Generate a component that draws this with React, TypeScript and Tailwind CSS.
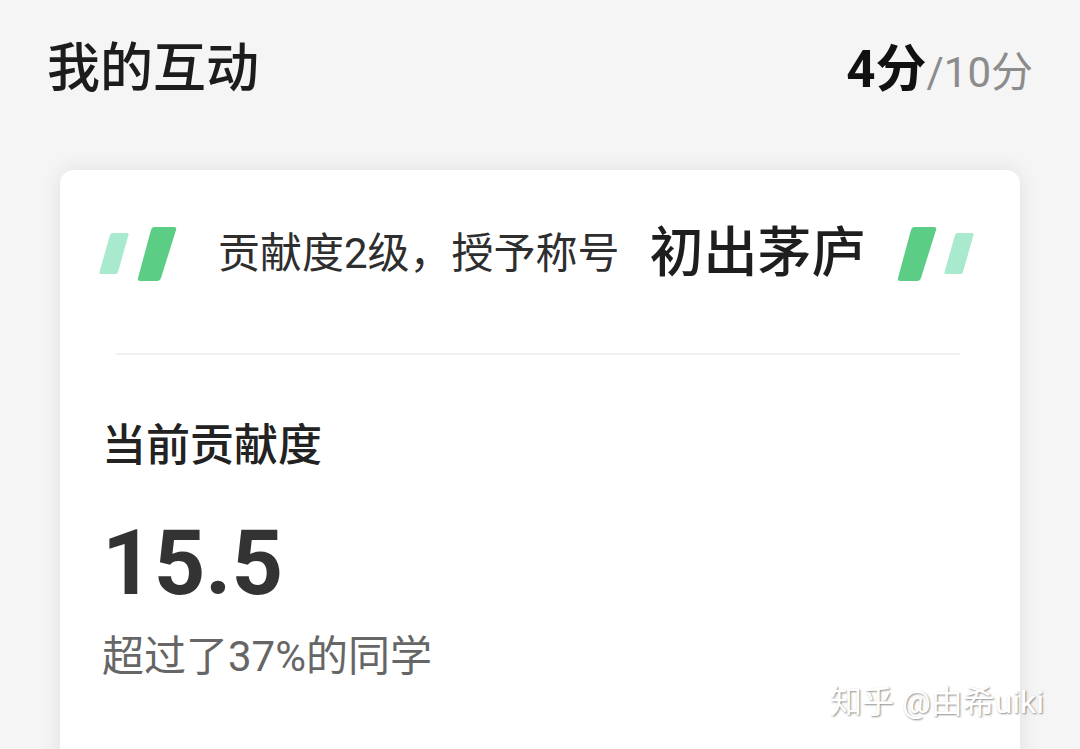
import React from "react";

const font = { fontFamily: "Roboto, 'Noto Sans CJK SC', sans-serif" };

function Light() {
  return (
    <svg width="31" height="56" viewBox="0 0 31 56">
      <path d="M15 7 L29 7 Q31 7 30.5 9 L20 46 Q19.5 48 17.5 48 L3 48 Q1 48 1.5 46 L12 9 Q12.5 7 15 7 Z" fill="#a9e9cd" />
    </svg>
  );
}

function Dark() {
  return (
    <svg width="41" height="56" viewBox="37 0 41 56">
      <path d="M55 1 L75 1 Q78 1 77 4 L62 52 Q61 55 58 55 L41 55 Q38 55 39 52 L52 4 Q53 1 55 1 Z" fill="#5bcd85" />
    </svg>
  );
}

export default function App() {
  return (
    <div className="relative h-[749px] w-[1080px] overflow-hidden bg-[#f5f5f5]" style={font}>
      <div className="flex items-center justify-between pl-[47px] pr-[47px] pt-[43px]">
        <div className="text-[53px] leading-none font-medium text-[#1c1c1c]">我的互动</div>
        <div className="flex items-baseline leading-none">
          <span className="text-[51px] font-bold text-[#111]">4分</span>
          <span className="text-[42px] text-[#8c8c8c]">/10分</span>
        </div>
      </div>

      <div className="mx-[60px] mt-[74px] h-[700px] rounded-[14px] bg-white shadow-[0_0_22px_rgba(0,0,0,0.09)]">
        <div className="flex h-[56px] translate-y-[56px] items-center pl-[38px]">
          <Light />
          <span className="ml-[7px]">
            <Dark />
          </span>
          <span className="ml-[41px] text-[42px] leading-none text-[#2e2e2e]">贡献度2级，授予称号</span>
          <span className="ml-[30px] text-[54px] leading-none font-medium text-[#1e1e1e]">初出茅庐</span>
          <span className="ml-[30px]">
            <Dark />
          </span>
          <span className="ml-[6px]">
            <Light />
          </span>
        </div>
        <div className="mt-[127px] ml-[56px] mr-[60px] h-[2px] bg-[#f0f0f0]" />
        <div className="px-[42px]">
          <div className="mt-[69px] text-[44px] leading-none font-medium text-[#222]">当前贡献度</div>
          <div className="mt-[51px] text-[90px] leading-none font-bold text-[#333]">15.5</div>
          <div className="mt-[27px] text-[42px] leading-none text-[#666]">超过了37%的同学</div>
        </div>
      </div>

      <div className="absolute left-[830px] top-[686px] text-[32px] leading-none text-white [text-shadow:1px_1px_2px_rgba(0,0,0,0.45)]">
        知乎 @由希uiki
      </div>
    </div>
  );
}
